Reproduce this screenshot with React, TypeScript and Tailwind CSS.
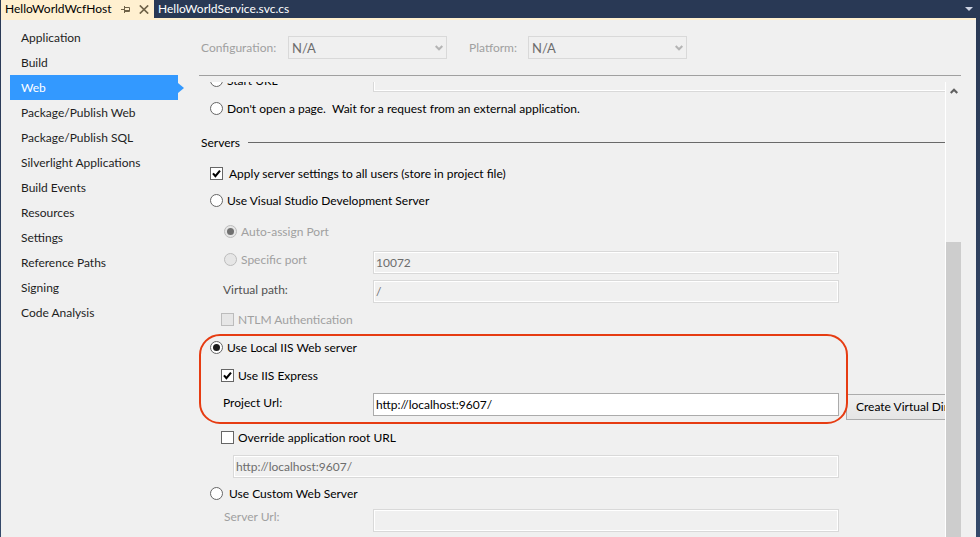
import type { ReactNode } from "react";

const pages = [
  "Application",
  "Build",
  "Web",
  "Package/Publish Web",
  "Package/Publish SQL",
  "Silverlight Applications",
  "Build Events",
  "Resources",
  "Settings",
  "Reference Paths",
  "Signing",
  "Code Analysis",
];

function Radio({
  name,
  checked,
  disabled,
  wide,
  children,
}: {
  name: string;
  checked?: boolean;
  disabled?: boolean;
  wide?: boolean;
  children: ReactNode;
}) {
  return (
    <label
      className={`flex h-[27px] items-center whitespace-pre ${wide ? "gap-1.5" : "gap-1"} ${disabled ? "text-[#a0a0a0]" : ""}`}
    >
      <span className="grid place-items-center">
        <input
          type="radio"
          name={name}
          defaultChecked={checked}
          disabled={disabled}
          className="peer col-start-1 row-start-1 size-[13px] appearance-none rounded-full border border-[#666] bg-white disabled:border-[#bcbcbc] disabled:bg-[#e6e6e6]"
        />
        <span className="pointer-events-none col-start-1 row-start-1 hidden size-[7px] rounded-full bg-[#1c1c1c] peer-checked:block peer-disabled:bg-[#707070]" />
      </span>
      {children}
    </label>
  );
}

function Check({
  checked,
  disabled,
  wide,
  children,
}: {
  checked?: boolean;
  disabled?: boolean;
  wide?: boolean;
  children: ReactNode;
}) {
  return (
    <label
      className={`flex h-[27px] items-center ${wide ? "gap-1.5" : "gap-1"} ${disabled ? "text-[#a0a0a0]" : ""}`}
    >
      <span className="grid place-items-center">
        <input
          type="checkbox"
          defaultChecked={checked}
          disabled={disabled}
          className="peer col-start-1 row-start-1 size-[13px] appearance-none border border-[#666] bg-white disabled:border-[#bcbcbc] disabled:bg-[#e6e6e6]"
        />
        <svg
          viewBox="0 0 13 13"
          className="pointer-events-none col-start-1 row-start-1 hidden size-[13px] peer-checked:block"
        >
          <path d="M3 6.4 5.4 9.2 10 3.6" fill="none" stroke="#000" strokeWidth="2.1" />
        </svg>
      </span>
      {children}
    </label>
  );
}

const disabledBox =
  "h-[23px] border border-[#d9d9d9] bg-[#f0f0f0] px-0.5 text-[#6d6d6d] shadow-[inset_0_0_0_1px_#fff] outline-none";

function Picker({ id, label, labelWidth }: { id: string; label: string; labelWidth: string }) {
  return (
    <div className="flex items-center">
      <label htmlFor={id} className={`${labelWidth} shrink-0 text-[#a0a0a0]`}>
        {label}
      </label>
      <div className="grid w-[159px] items-center">
        <select
          id={id}
          disabled
          className="col-start-1 row-start-1 h-[23px] w-full appearance-none border border-[#d9d9d9] bg-[#f0f0f0] px-[3px] text-[13px] text-[#6d6d6d] opacity-100"
        >
          <option>N/A</option>
        </select>
        <svg
          viewBox="0 0 8 6"
          className="pointer-events-none col-start-1 row-start-1 mr-1 h-1.5 w-2 justify-self-end"
        >
          <path d="M.7 1 4 4.3 7.3 1" fill="none" stroke="#b4b4b4" strokeWidth="2" />
        </svg>
      </div>
    </div>
  );
}

export default function App() {
  return (
    <div className="flex h-screen flex-col overflow-hidden bg-gradient-to-b from-[#293955] to-[#35496a] pr-1 pl-px font-[Lato,'Open_Sans',sans-serif] text-[12px] leading-4 text-black">
      <div role="tablist" className="-mr-1 flex h-[18px] shrink-0 items-center bg-[#293955]">
        <div className="flex h-full w-[153px] items-center bg-[#fff0d0]">
          <button role="tab" aria-selected="true" className="w-[120px] pl-1 text-left">
            HelloWorldWcfHost
          </button>
          <button aria-label="Pin tab" className="mr-[9px]">
            <svg viewBox="0 0 9 7" className="h-[7px] w-[9px]" fill="none" stroke="#6f6248">
              <path d="M0 3.5h3M3.5 0v7M3.5 1.5h5v4h-5M4 4.5h4" />
            </svg>
          </button>
          <button aria-label="Close tab">
            <svg viewBox="0 0 10 9" className="h-[9px] w-2.5" fill="none" stroke="#6f6248" strokeWidth="1.6">
              <path d="M.8.4 9.2 8.6M9.2.4.8 8.6" />
            </svg>
          </button>
        </div>
        <button role="tab" aria-selected="false" className="flex-1 pl-1 text-left text-white">
          HelloWorldService.svc.cs
        </button>
        <button aria-label="Open documents" className="mr-[7px]">
          <svg viewBox="0 0 8 4" className="h-1 w-2" fill="#ced4e3">
            <path d="M0 0h8L4 4z" />
          </svg>
        </button>
      </div>

      <div className="flex min-h-0 flex-1 border-t-2 border-[#fff0d0] bg-[#f0f0f0]">
        <nav className="w-[198px] shrink-0 pt-[5px] pl-[9px] text-[#1e1e1e]">
          {pages.map((page) =>
            page === "Web" ? (
              <a key={page} href="#" aria-current="page" className="flex items-center text-white">
                <span className="flex h-[25px] w-[168px] items-center bg-[#3399ff] pl-[11px]">{page}</span>
                <svg viewBox="0 0 6 10" className="h-2.5 w-1.5" fill="#3399ff">
                  <path d="M0 0 6 5 0 10z" />
                </svg>
              </a>
            ) : (
              <a key={page} href="#" className="flex h-[25px] items-center pl-[11px]">
                {page}
              </a>
            ),
          )}
        </nav>

        <main className="mr-[15px] flex min-w-0 flex-1 flex-col">
          <div className="flex h-14 shrink-0 items-center gap-[22px] border-b border-[#a0a0a0] pl-0.5">
            <Picker id="configuration" label="Configuration:" labelWidth="w-[87px]" />
            <Picker id="platform" label="Platform:" labelWidth="w-[59px]" />
          </div>

          <div className="mt-1.5 flex min-h-0 flex-1">
            <form className="min-w-0 flex-1 overflow-hidden border-r border-white">
              <div className="-mt-[13px] flex h-[23px] items-center pl-[11px]">
                <div className="w-[163px] shrink-0">
                  <Radio name="start">Start URL</Radio>
                </div>
                <input aria-label="Start URL" disabled className={`${disabledBox} w-[700px] shrink-0`} />
              </div>
              <div className="mt-[3px] pl-[11px]">
                <Radio name="start">{"Don't open a page.  Wait for a request from an external application."}</Radio>
              </div>

              <h2 className="mt-[7px] flex h-[27px] items-center gap-2 pl-0.5">
                Servers
                <span className="h-px flex-1 bg-[#696969]" />
              </h2>

              <div className="mt-1 pl-[11px]">
                <Check checked wide>
                  Apply server settings to all users (store in project file)
                </Check>
                <Radio name="server">Use Visual Studio Development Server</Radio>
              </div>

              <div className="mt-1 pl-[25px]">
                <Radio name="port" checked disabled>
                  Auto-assign Port
                </Radio>
                <div className="mt-px flex h-7">
                  <div className="w-[149px] shrink-0">
                    <Radio name="port" disabled>
                      Specific port
                    </Radio>
                  </div>
                  <input
                    aria-label="Port number"
                    disabled
                    defaultValue="10072"
                    className={`${disabledBox} w-[466px] self-end`}
                  />
                </div>
              </div>
              <div className="mt-0.5 flex h-[27px] pl-6">
                <label htmlFor="vpath" className="flex w-[150px] shrink-0 items-center text-[#505050]">
                  Virtual path:
                </label>
                <input id="vpath" disabled defaultValue="/" className={`${disabledBox} w-[466px] self-end`} />
              </div>
              <div className="mt-[3px] pl-[22px]">
                <Check disabled>NTLM Authentication</Check>
              </div>

              <section className="relative mt-px h-[90px]">
                <div className="pl-[11px]">
                  <Radio name="server" checked>
                    Use Local IIS Web server
                  </Radio>
                </div>
                <div className="mt-px pl-[22px]">
                  <Check checked>Use IIS Express</Check>
                </div>
                <div className="flex h-[27px] pl-6">
                  <label htmlFor="purl" className="flex w-[150px] shrink-0 items-center">
                    Project Url:
                  </label>
                  <input
                    id="purl"
                    defaultValue="http://localhost:9607/"
                    className="h-[23px] w-[466px] shrink-0 self-end border border-[#ababab] bg-white px-0.5 outline-none"
                  />
                  <button
                    type="button"
                    className="mt-[5px] ml-[7px] h-[26px] shrink-0 border border-[#acacac] bg-gradient-to-b from-[#f0f0f0] to-[#e5e5e5] px-[9px] whitespace-nowrap"
                  >
                    Create Virtual Directory
                  </button>
                </div>
                <div className="pointer-events-none absolute inset-y-0 left-0 w-[649px] rounded-[21px] border-2 border-[#e63c12]" />
              </section>

              <div className="pl-[22px]">
                <Check>Override application root URL</Check>
              </div>
              <div className="mt-1 flex pl-[34px]">
                <input
                  aria-label="Application root URL"
                  disabled
                  defaultValue="http://localhost:9607/"
                  className={`${disabledBox} w-[606px]`}
                />
              </div>
              <div className="mt-0.5 pl-[11px]">
                <Radio name="server" wide>
                  Use Custom Web Server
                </Radio>
              </div>
              <div className="mt-0.5 flex pl-[25px]">
                <label htmlFor="surl" className="w-[149px] shrink-0 text-[#a0a0a0]">
                  Server Url:
                </label>
                <input id="surl" disabled className={`${disabledBox} w-[466px]`} />
              </div>
            </form>

            <div className="flex w-[15px] shrink-0 flex-col items-center">
              <button aria-label="Scroll up" className="mt-1.5 h-1.5">
                <svg viewBox="0 0 8 6" className="h-1.5 w-2">
                  <path d="M.7 5 4 1.7 7.3 5" fill="none" stroke="#606060" strokeWidth="2.2" />
                </svg>
              </button>
              <div className="mt-[148px] w-full flex-1 bg-[#cdcdcd]" />
            </div>
          </div>
        </main>
      </div>
    </div>
  );
}
